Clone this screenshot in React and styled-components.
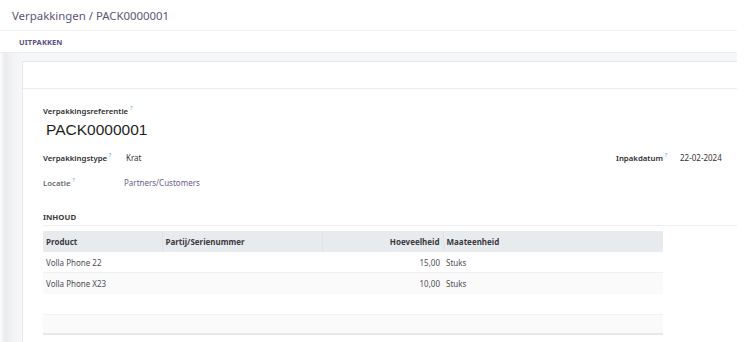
import { createGlobalStyle, styled } from 'styled-components';

const GlobalStyle = createGlobalStyle`
  html, body {
    margin: 0;
    padding: 0;
    background: #ffffff;
  }
  body {
    font-family: "Noto Sans", "Open Sans", sans-serif;
    color: #444;
  }
`;

const Page = styled.div`
  width: 752px;
  height: 342px;
  overflow: hidden;
  background: #fff;
`;

const Main = styled.div`
  width: 737px;
`;

const Breadcrumb = styled.div`
  height: 30px;
  display: flex;
  align-items: center;
  padding-left: 12px;
  font-size: 11.4px;
  color: #5d5474;
  border-bottom: 1px solid #f1f1f3;
`;

const Toolbar = styled.div`
  height: 21px;
  display: flex;
  align-items: center;
  padding-left: 19px;
  border-bottom: 1px solid #ececef;
`;

const ToolButton = styled.span`
  font-size: 7.5px;
  font-weight: 700;
  color: #5b4e86;
  letter-spacing: 0.1px;
`;

const Content = styled.div`
  padding: 8px 0 0 22px;
  background: linear-gradient(to right, #fdfdfd 0, #ebebed 5px, #f3f4f6 14px, #f6f7f9 22px);
  height: 290px;
`;

const Sheet = styled.div`
  background: #fff;
  border-top: 1px solid #e6e7ea;
  border-left: 1px solid #e6e7ea;
  height: 100%;
`;

const SheetHeader = styled.div`
  height: 26px;
  border-bottom: 1px solid #ececee;
`;

const SheetBody = styled.div`
  padding: 8px 0 0 20px;
`;

const Label = styled.span`
  font-size: 7.8px;
  font-weight: 600;
  color: ${({ $muted }) => ($muted ? '#6a6a6a' : '#2f2f33')};
  white-space: nowrap;
`;

const Help = styled.sup`
  font-size: 5px;
  color: #3e8ed0;
  margin-left: 2px;
  font-weight: 400;
`;

const Title = styled.div`
  font-family: "Liberation Sans", Arial, sans-serif;
  font-size: 15.5px;
  color: #1f1f22;
  padding-left: 3px;
  margin-top: 1px;
  line-height: 20px;
`;

const FieldRow = styled.div`
  display: grid;
  grid-template-columns: 83px 490px 64px auto;
  align-items: center;
  height: 14px;
  margin-top: ${({ $top }) => $top}px;
`;

const Value = styled.span`
  font-size: 8px;
  color: ${({ $link }) => ($link ? '#6a5a8c' : '#333')};
  margin-left: ${({ $shift }) => $shift || 0}px;
  white-space: nowrap;
`;

const SectionTitle = styled.div`
  margin-top: 23px;
  font-size: 7.8px;
  font-weight: 700;
  color: #3c3c40;
  padding-bottom: 3px;
  border-bottom: 1px solid #eeeff1;
`;

const Table = styled.table`
  margin-top: 5px;
  width: 620px;
  border-collapse: collapse;
  font-size: 8px;
  table-layout: fixed;
`;

const Th = styled.th`
  height: 20px;
  background: #e8ebee;
  text-align: ${({ $right }) => ($right ? 'right' : 'left')};
  font-weight: 700;
  color: #3a3a3e;
  padding: 0 3px;
  border-left: ${({ $first }) => ($first ? 'none' : '1px solid #dfe2e6')};
  white-space: nowrap;
`;

const Tr = styled.tr`
  background: ${({ $alt }) => ($alt ? '#fafafa' : '#ffffff')};
  border-top: 1px solid ${({ $alt }) => ($alt ? '#f1f1f2' : 'transparent')};
  border-bottom: ${({ $last }) => ($last ? '2px solid #e4e7eb' : 'none')};
`;

const Td = styled.td`
  height: ${({ $short }) => ($short ? 18 : 20)}px;
  padding: 0 3px;
  color: #4d4d52;
  text-align: ${({ $right }) => ($right ? 'right' : 'left')};
  white-space: nowrap;
`;

const lines = [
  { product: 'Volla Phone 22', qty: '15,00', uom: 'Stuks' },
  { product: 'Volla Phone X23', qty: '10,00', uom: 'Stuks' },
];

export default function App() {
  return (
    <Page>
      <GlobalStyle />
      <Main>
        <Breadcrumb>Verpakkingen / PACK0000001</Breadcrumb>
        <Toolbar>
          <ToolButton>UITPAKKEN</ToolButton>
        </Toolbar>
        <Content>
          <Sheet>
            <SheetHeader />
            <SheetBody>
              <Label>
                Verpakkingsreferentie<Help>?</Help>
              </Label>
              <Title>PACK0000001</Title>
              <FieldRow $top={10}>
                <Label>
                  Verpakkingstype<Help>?</Help>
                </Label>
                <Value>Krat</Value>
                <Label>
                  Inpakdatum<Help>?</Help>
                </Label>
                <Value>22-02-2024</Value>
              </FieldRow>
              <FieldRow $top={11}>
                <Label $muted>
                  Locatie<Help>?</Help>
                </Label>
                <Value $link $shift={-2}>Partners/Customers</Value>
              </FieldRow>
              <SectionTitle>INHOUD</SectionTitle>
              <Table>
                <colgroup>
                  <col style={{ width: 119 }} />
                  <col style={{ width: 160 }} />
                  <col style={{ width: 121 }} />
                  <col />
                </colgroup>
                <thead>
                  <tr>
                    <Th $first>Product</Th>
                    <Th>Partij/Serienummer</Th>
                    <Th $right>Hoeveelheid</Th>
                    <Th>Maateenheid</Th>
                  </tr>
                </thead>
                <tbody>
                  {lines.map((line, i) => (
                    <Tr key={line.product} $alt={i % 2 === 1}>
                      <Td>{line.product}</Td>
                      <Td />
                      <Td $right>{line.qty}</Td>
                      <Td>{line.uom}</Td>
                    </Tr>
                  ))}
                  <Tr>
                    <Td colSpan={4} />
                  </Tr>
                  <Tr $alt $last>
                    <Td colSpan={4} $short />
                  </Tr>
                </tbody>
              </Table>
            </SheetBody>
          </Sheet>
        </Content>
      </Main>
    </Page>
  );
}
